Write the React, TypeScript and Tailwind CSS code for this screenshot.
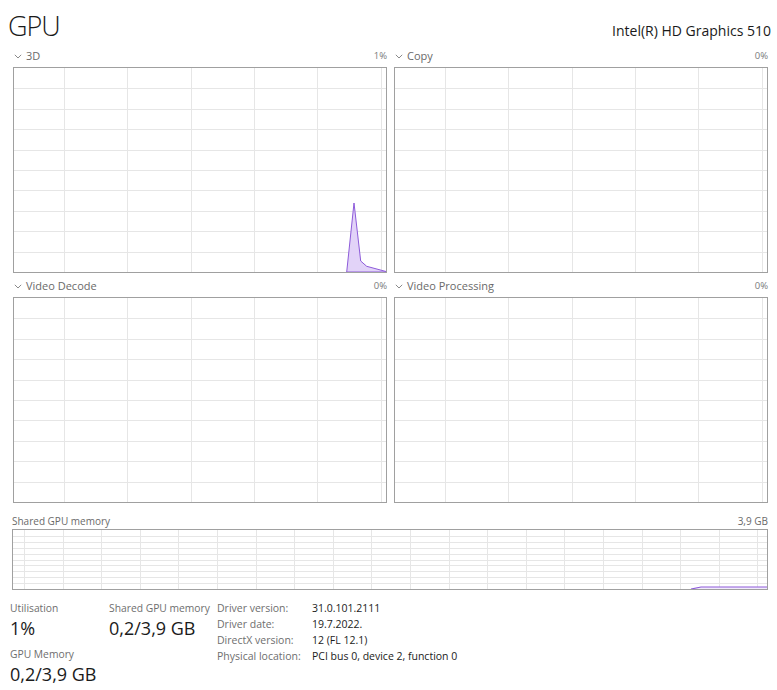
const GRID = '#e6e6e6';

type GraphProps = {
  w: number;
  h: number;
  vOffset: number;
  vStep: number;
  rows: number;
  children?: React.ReactNode;
};

// grid-lined chart area, drawn as svg
const Graph = ({ w, h, vOffset, vStep, rows, children }: GraphProps) => {
  const vlines: number[] = [];
  for (let x = vOffset; x < w - 1; x += vStep) vlines.push(Math.round(x));
  const hlines: number[] = [];
  for (let i = 1; i < rows; i++) hlines.push(Math.round((h * i) / rows));

  return (
    <svg viewBox={`0 0 ${w} ${h}`} preserveAspectRatio="none" className="block w-full h-full">
      {hlines.map((y) => (
        <line key={`h${y}`} x1={0} x2={w} y1={y + 0.5} y2={y + 0.5} stroke={GRID} strokeWidth={1} shapeRendering="crispEdges" />
      ))}
      {vlines.map((x) => (
        <line key={`v${x}`} x1={x + 0.5} x2={x + 0.5} y1={0} y2={h} stroke={GRID} strokeWidth={1} shapeRendering="crispEdges" />
      ))}
      {children}
    </svg>
  );
};

const Chevron = () => (
  <svg width="8" height="5" viewBox="0 0 8 5" className="mr-[4px]">
    <path d="M0.8 0.8 L4 4 L7.2 0.8" fill="none" stroke="#8a8a8a" strokeWidth="1" />
  </svg>
);

const EngineGraph = ({ name, pct, children }: { name: string; pct: string; children?: React.ReactNode }) => (
  <div className="flex flex-col">
    <div className="h-[14px] flex items-center justify-between">
      <div className="flex items-center text-[11px] text-[#6a6a6a] pl-[1px]">
        <Chevron />
        {name}
      </div>
      <span className="text-[9.5px] text-[#7a7a7a]">{pct}</span>
    </div>
    <div className="mt-[4px] h-[206px] border border-[#a0a0a0]">
      <Graph w={372} h={204} vOffset={50} vStep={63.3} rows={10}>
        {children}
      </Graph>
    </div>
  </div>
);

const Stat = ({ label, value, className = '' }: { label: string; value: string; className?: string }) => (
  <div className={className}>
    <div className="text-[10.3px] leading-[16px] text-[#6e6e6e]">{label}</div>
    <div className="text-[18px] leading-[24px] text-[#1b1b1b]">{value}</div>
  </div>
);

const details: [string, string][] = [
  ['Driver version:', '31.0.101.2111'],
  ['Driver date:', '19.7.2022.'],
  ['DirectX version:', '12 (FL 12.1)'],
  ['Physical location:', 'PCI bus 0, device 2, function 0'],
];

export default function App() {
  return (
    <div className="w-[777px] h-[690px] bg-white overflow-hidden font-['Open_Sans',sans-serif]">
      {/* Header */}
      <div className="flex items-baseline justify-between pl-[8px] pr-[6px] pt-[12px]">
        <div className="text-[27px] leading-[28px] font-light tracking-[-1px] text-[#1a1a1a]">GPU</div>
        <div className="text-[14px] text-[#1a1a1a]">Intel(R) HD Graphics 510</div>
      </div>

      {/* Engine graphs */}
      <div className="grid grid-cols-2 gap-x-[7px] gap-y-[6px] pl-[13px] pr-[9px] mt-[8px]">
        <EngineGraph name="3D" pct="1%">
          <polygon
            points="332.7,204 340,135 346.7,193 352.7,198.3 372,203.5 372,204"
            fill="#e2d3f8"
            stroke="#8d5bd9"
            strokeWidth={1}
          />
        </EngineGraph>
        <EngineGraph name="Copy" pct="0%" />
        <EngineGraph name="Video Decode" pct="0%" />
        <EngineGraph name="Video Processing" pct="0%" />
      </div>

      {/* Shared GPU memory */}
      <div className="mt-[11px] pl-[12px] pr-[9px]">
        <div className="h-[14px] flex items-center justify-between text-[10px] text-[#6a6a6a]">
          <span>Shared GPU memory</span>
          <span>3,9 GB</span>
        </div>
        <div className="mt-[1px] h-[61px] border border-[#a0a0a0]">
          <Graph w={754} h={59} vOffset={11} vStep={38.6} rows={10}>
            <polygon points="678,59 688,57 754,57 754,59" fill="#f1eafb" />
            <polyline points="678,59 688,57 754,57" fill="none" stroke="#8d5bd9" strokeWidth={1.2} />
          </Graph>
        </div>
      </div>

      {/* Stats */}
      <div className="mt-[10px] pl-[10px] flex items-start">
        <div className="w-[99px]">
          <Stat label="Utilisation" value="1%" />
          <Stat label="GPU Memory" value="0,2/3,9 GB" className="mt-[6px]" />
        </div>
        <Stat label="Shared GPU memory" value="0,2/3,9 GB" className="w-[108px]" />
        <div className="grid grid-cols-[95px_auto] content-start text-[10.5px] leading-[16px]">
          {details.map(([k, v]) => (
            <div key={k} className="contents">
              <span className="text-[#6e6e6e]">{k}</span>
              <span className="text-[#1b1b1b]">{v}</span>
            </div>
          ))}
        </div>
      </div>
    </div>
  );
}
